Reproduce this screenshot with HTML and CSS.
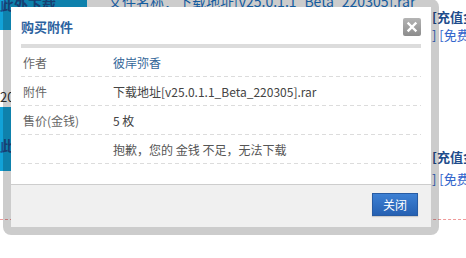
FILE: index.html
```html
<!DOCTYPE html>
<html lang="zh-CN">
<head>
<meta charset="utf-8">
<title>购买附件</title>
<link rel="stylesheet" href="styles.css">
</head>
<body>
<div class="page">
  <div class="list">
    <div class="item item-a">
      <div class="thumb-col">
        <div class="thumb">此外下载</div>
        <div class="date">2022</div>
      </div>
      <div class="info"><a class="title">文件名称：下载地址[v25.0.1.1_Beta_220305].rar</a></div>
      <div class="side">
        <div class="buy">[充值金币]</div>
        <div class="free">] [免费下载]</div>
      </div>
    </div>
    <div class="item item-b">
      <div class="thumb-col">
        <div class="thumb">此外下载</div>
      </div>
      <div class="info"><a class="title">文件名称：下载地址[v25.0.1.1_Beta_220305].rar</a></div>
      <div class="side">
        <div class="buy">[充值金币]</div>
        <div class="free">] [免费下载]</div>
      </div>
    </div>
  </div>
</div>

<div class="dialog">
  <div class="dlg-body">
    <div class="dlg-main">
      <div class="dlg-head">
        <h3 class="dlg-title">购买附件</h3>
        <span class="dlg-x"><svg width="18" height="18" viewBox="0 0 18 18"><path d="M5.5 5.5 L12.5 12.5 M12.5 5.5 L5.5 12.5" stroke="#fff" stroke-width="2.4" stroke-linecap="square"/></svg></span>
      </div>
      <div class="rows">
        <div class="row"><span class="lbl">作者</span><a class="val link">彼岸弥香</a></div>
        <div class="row"><span class="lbl">附件</span><span class="val">下载地址[v25.0.1.1_Beta_220305].rar</span></div>
        <div class="row"><span class="lbl">售价(金钱)</span><span class="val">5 枚</span></div>
        <div class="row"><span class="lbl"></span><span class="val msg">抱歉，您的 金钱 不足，无法下载</span></div>
      </div>
    </div>
    <div class="dlg-foot">
      <button class="btn">关闭</button>
    </div>
  </div>
</div>
</body>
</html>
```
FILE: styles.css
```css
html, body {
  margin: 0;
  padding: 0;
}
body {
  width: 466px;
  height: 258px;
  overflow: hidden;
  position: relative;
  background: #fff;
  font-family: "Noto Sans CJK SC", "Noto Sans", sans-serif;
  font-size: 12px;
  color: #333;
}

/* background page */
.list {
  margin-top: -34px;
}
.item {
  display: grid;
  grid-template-columns: 87px 345px auto;
  white-space: nowrap;
}
.thumb {
  height: 64px;
  box-sizing: border-box;
  padding-top: 30px;
  background: #12a2d8;
  color: #1d4f8e;
  font-weight: bold;
  font-size: 14px;
  line-height: 16px;
}
.date {
  margin-top: 59px;
  line-height: 16px;
  font-size: 13px;
  color: #333;
  padding-bottom: 2px;
}
.info {
  padding-left: 21px;
}
.title {
  display: block;
  line-height: 20px;
  font-size: 14px;
  color: #1a73c7;
  overflow: hidden;
}
.item-a .info { padding-top: 25px; }
.item-b .info { padding-top: 18px; }
.side {
  font-size: 13px;
  line-height: 16px;
}
.item-a .side { padding-top: 43px; }
.item-b .side { padding-top: 42px; }
.buy {
  color: #1f4d8c;
  font-weight: bold;
}
.free {
  margin-top: 2px;
  color: #3366cc;
}
.item-b .free { margin-top: 6px; }
.item-b {
  height: 113px;
  box-sizing: border-box;
  border-bottom: 1px dashed #ef9a9a;
}

/* dialog */
.dialog {
  position: absolute;
  left: 3px;
  top: -1px;
  width: 436px;
  padding: 8px;
  box-sizing: border-box;
  background: rgba(0, 0, 0, 0.2);
  border-radius: 8px;
}
.dlg-body {
  background: #fff;
}
.dlg-main {
  padding: 0 10px;
}
.dlg-head {
  height: 37px;
  display: flex;
  justify-content: space-between;
  align-items: flex-start;
  border-bottom: 4px solid #dcdcdc;
}
.dlg-title {
  margin: 11px 0 0;
  line-height: 18px;
  font-size: 13px;
  font-weight: bold;
  color: #2c62a0;
}
.dlg-x {
  margin-top: 11px;
  width: 18px;
  height: 18px;
  border-radius: 2px;
  background: linear-gradient(#b4b4b4, #8c8c8c);
}
.dlg-x svg {
  display: block;
}
.row {
  display: grid;
  grid-template-columns: 92px 1fr;
  align-items: center;
  height: 29px;
  padding-bottom: 1px;
  box-sizing: border-box;
  background: repeating-linear-gradient(90deg, #dcdcdc 0 4px, transparent 4px 7px) left bottom / 100% 1px no-repeat;
}
.lbl {
  padding-left: 2px;
  color: #666;
}
.val {
  color: #444;
}
.link {
  color: #336699;
}
.msg {
  color: #555;
}
.rows {
  margin-bottom: 20px;
}
.dlg-foot {
  border-top: 1px solid #cdcdcd;
  background: #f0f0f0;
  padding: 8px 13px 11px;
  display: flex;
  justify-content: flex-end;
}
.btn {
  width: 46px;
  height: 23px;
  padding: 0;
  border: 1px solid #275ba3;
  background: linear-gradient(#3d80d4, #2661b2);
  color: #fff;
  font-family: "Noto Sans CJK SC", sans-serif;
  font-size: 12px;
  line-height: 21px;
  box-shadow: 0 1px 1px rgba(0, 0, 0, 0.15);
}
```
